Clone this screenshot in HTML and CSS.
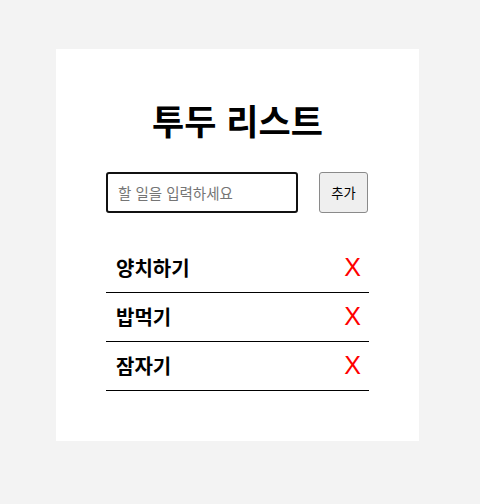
FILE: index.html
```html
<!DOCTYPE html>
<html lang="ko">
<head>
<meta charset="utf-8">
<link rel="stylesheet" href="styles.css">
</head>
<body>
<div class="card">
  <h1 class="title">투두 리스트</h1>
  <form class="add-form">
    <input class="todo-input" type="text" placeholder="할 일을 입력하세요">
    <button class="add-btn" type="button">추가</button>
  </form>
  <ul class="todo-list">
    <li class="todo-item"><span class="todo-text">양치하기</span><span class="del">X</span></li>
    <li class="todo-item"><span class="todo-text">밥먹기</span><span class="del">X</span></li>
    <li class="todo-item"><span class="todo-text">잠자기</span><span class="del">X</span></li>
  </ul>
</div>
</body>
</html>
```
FILE: styles.css
```css
html, body {
  margin: 0;
  padding: 0;
  background: #f3f3f3;
  font-family: "Noto Sans CJK KR", "Noto Sans", sans-serif;
}
body {
  padding-top: 49px;
}
.card {
  width: 263px;
  margin-left: 56px;
  background: #fff;
  padding: 40px 50px 50px;
}
.title {
  margin: 0;
  text-align: center;
  font-size: 35px;
  font-weight: 700;
  line-height: 62px;
  color: #000;
}
.add-form {
  display: flex;
  gap: 21px;
  margin-top: 21px;
}
.todo-input {
  box-sizing: border-box;
  width: 192px;
  height: 41px;
  border: 2px solid #111;
  border-radius: 3px;
  padding: 0 10px;
  font-family: inherit;
  font-size: 14.5px;
  outline: none;
}
.todo-input::placeholder {
  color: #757575;
}
.add-btn {
  box-sizing: border-box;
  width: 49px;
  height: 41px;
  background: #efefef;
  border: 1px solid #8a8a8a;
  border-radius: 3px;
  font-family: inherit;
  font-size: 13.3px;
  color: #000;
  padding: 0;
}
.todo-list {
  list-style: none;
  margin: 31px 0 0;
  padding: 0;
}
.todo-item {
  display: flex;
  justify-content: space-between;
  align-items: center;
  height: 46px;
  border-bottom: 1px solid #000;
  padding: 0 10px 2px;
}
.todo-text {
  font-size: 20px;
  font-weight: 700;
}
.del {
  color: #f00;
  font-family: "Liberation Sans", sans-serif;
  font-size: 25px;
  margin-right: -2px;
}
```
